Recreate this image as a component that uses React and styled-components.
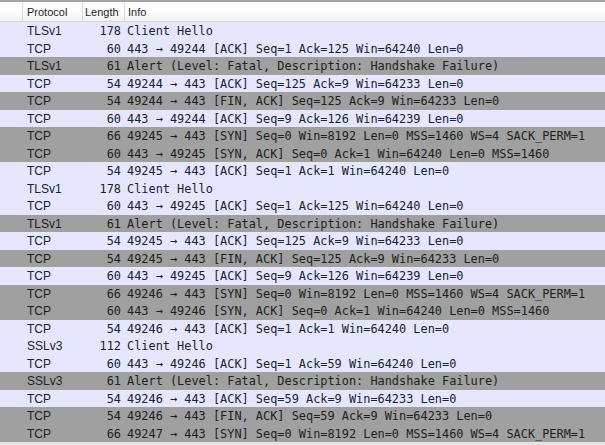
import React from "react";
import styled, { createGlobalStyle } from "styled-components";

const GlobalStyle = createGlobalStyle`
  html, body {
    margin: 0;
    padding: 0;
    background: #ffffff;
  }
`;

const A = "\u2192";

const packets = [
  ["TLSv1", 178, "Client Hello", "tcp"],
  ["TCP", 60, `443 ${A} 49244 [ACK] Seq=1 Ack=125 Win=64240 Len=0`, "tcp"],
  ["TLSv1", 61, "Alert (Level: Fatal, Description: Handshake Failure)", "gray"],
  ["TCP", 54, `49244 ${A} 443 [ACK] Seq=125 Ack=9 Win=64233 Len=0`, "tcp"],
  ["TCP", 54, `49244 ${A} 443 [FIN, ACK] Seq=125 Ack=9 Win=64233 Len=0`, "gray"],
  ["TCP", 60, `443 ${A} 49244 [ACK] Seq=9 Ack=126 Win=64239 Len=0`, "tcp"],
  ["TCP", 66, `49245 ${A} 443 [SYN] Seq=0 Win=8192 Len=0 MSS=1460 WS=4 SACK_PERM=1`, "gray"],
  ["TCP", 60, `443 ${A} 49245 [SYN, ACK] Seq=0 Ack=1 Win=64240 Len=0 MSS=1460`, "gray"],
  ["TCP", 54, `49245 ${A} 443 [ACK] Seq=1 Ack=1 Win=64240 Len=0`, "tcp"],
  ["TLSv1", 178, "Client Hello", "tcp"],
  ["TCP", 60, `443 ${A} 49245 [ACK] Seq=1 Ack=125 Win=64240 Len=0`, "tcp"],
  ["TLSv1", 61, "Alert (Level: Fatal, Description: Handshake Failure)", "gray"],
  ["TCP", 54, `49245 ${A} 443 [ACK] Seq=125 Ack=9 Win=64233 Len=0`, "tcp"],
  ["TCP", 54, `49245 ${A} 443 [FIN, ACK] Seq=125 Ack=9 Win=64233 Len=0`, "gray"],
  ["TCP", 60, `443 ${A} 49245 [ACK] Seq=9 Ack=126 Win=64239 Len=0`, "tcp"],
  ["TCP", 66, `49246 ${A} 443 [SYN] Seq=0 Win=8192 Len=0 MSS=1460 WS=4 SACK_PERM=1`, "gray"],
  ["TCP", 60, `443 ${A} 49246 [SYN, ACK] Seq=0 Ack=1 Win=64240 Len=0 MSS=1460`, "gray"],
  ["TCP", 54, `49246 ${A} 443 [ACK] Seq=1 Ack=1 Win=64240 Len=0`, "tcp"],
  ["SSLv3", 112, "Client Hello", "tcp"],
  ["TCP", 60, `443 ${A} 49246 [ACK] Seq=1 Ack=59 Win=64240 Len=0`, "tcp"],
  ["SSLv3", 61, "Alert (Level: Fatal, Description: Handshake Failure)", "gray"],
  ["TCP", 54, `49246 ${A} 443 [ACK] Seq=59 Ack=9 Win=64233 Len=0`, "tcp"],
  ["TCP", 54, `49246 ${A} 443 [FIN, ACK] Seq=59 Ack=9 Win=64233 Len=0`, "gray"],
  ["TCP", 66, `49247 ${A} 443 [SYN] Seq=0 Win=8192 Len=0 MSS=1460 WS=4 SACK_PERM=1`, "gray"],
];

const App = () => {
  return (
    <>
      <GlobalStyle />
      <StPacketList>
        <StHeader>
          <StHeadCell />
          <StHeadCell>Protocol</StHeadCell>
          <StHeadCell>Length</StHeadCell>
          <StHeadCell $last>Info</StHeadCell>
        </StHeader>
        <StBody>
          {packets.map(([proto, len, info, kind], i) => (
            <StRow key={i} $kind={kind}>
              <span />
              <StProto>{proto}</StProto>
              <StLength>{len}</StLength>
              <StInfo>{info}</StInfo>
            </StRow>
          ))}
        </StBody>
      </StPacketList>
    </>
  );
};

export default App;

const columns = "23px 60px 42px 1fr";

const StPacketList = styled.div`
  width: 605px;
  height: 445px;
  overflow: hidden;
  box-sizing: border-box;
  border-top: 2px solid #a4a4a4;
  display: flex;
  flex-direction: column;
  background: #e4e4e4;
`;

const StHeader = styled.div`
  display: grid;
  grid-template-columns: ${columns};
  height: 20px;
  box-sizing: border-box;
  border-bottom: 1px solid #d6d6d6;
  background: linear-gradient(#ffffff 0%, #ffffff 40%, #f1f2f3 100%);
`;

const StHeadCell = styled.div`
  box-sizing: border-box;
  border-right: ${(props) => (props.$last ? "none" : "1px solid #dadada")};
  padding: 2px 0 0 4px;
  font-family: "Liberation Sans", Arial, sans-serif;
  font-size: 11px;
  line-height: 16px;
  color: #1c1c1c;
  &:nth-child(3) {
    padding-left: 2px;
  }
  &:nth-child(4) {
    padding-left: 3px;
  }
`;

const StBody = styled.div`
  display: flex;
  flex-direction: column;
`;

const StRow = styled.div`
  display: grid;
  grid-template-columns: ${columns};
  height: 17.5px;
  flex-shrink: 0;
  align-items: center;
  background-color: ${(props) =>
    props.$kind === "gray" ? "#a0a0a0" : "#e7e6ff"};
  color: ${(props) => (props.$kind === "gray" ? "#1a1f22" : "#12272e")};
  white-space: pre;
  overflow: hidden;
`;

const StProto = styled.span`
  padding-left: 4px;
  padding-top: 1px;
  font-family: "Liberation Sans", Arial, sans-serif;
  font-size: 12px;
`;

const StLength = styled.span`
  text-align: right;
  padding-right: 4px;
  padding-top: 1px;
  font-family: "DejaVu Sans Mono", "Liberation Mono", monospace;
  font-size: 11.9px;
`;

const StInfo = styled.span`
  padding-left: 2px;
  padding-top: 1px;
  font-family: "DejaVu Sans Mono", "Liberation Mono", monospace;
  font-size: 11.9px;
  overflow: hidden;
`;
